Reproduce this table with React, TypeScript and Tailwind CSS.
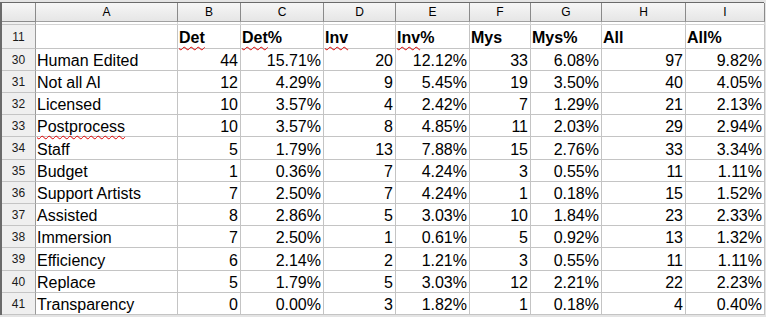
const cols = [
  { key: 'A', w: 'w-[142px]' },
  { key: 'B', w: 'w-[63px]' },
  { key: 'C', w: 'w-[83px]' },
  { key: 'D', w: 'w-[72px]' },
  { key: 'E', w: 'w-[74px]' },
  { key: 'F', w: 'w-[61px]' },
  { key: 'G', w: 'w-[71px]' },
  { key: 'H', w: 'w-[84px]' },
  { key: 'I', w: 'w-[79px]' },
]

const rows: { n: number; h: string; cells: string[]; wavy?: boolean }[] = [
  { n: 30, h: 'h-[22px]', cells: ['Human Edited', '44', '15.71%', '20', '12.12%', '33', '6.08%', '97', '9.82%'] },
  { n: 31, h: 'h-[22px]', cells: ['Not all AI', '12', '4.29%', '9', '5.45%', '19', '3.50%', '40', '4.05%'] },
  { n: 32, h: 'h-[22px]', cells: ['Licensed', '10', '3.57%', '4', '2.42%', '7', '1.29%', '21', '2.13%'] },
  { n: 33, h: 'h-[22px]', cells: ['Postprocess', '10', '3.57%', '8', '4.85%', '11', '2.03%', '29', '2.94%'], wavy: true },
  { n: 34, h: 'h-[23px]', cells: ['Staff', '5', '1.79%', '13', '7.88%', '15', '2.76%', '33', '3.34%'] },
  { n: 35, h: 'h-[22px]', cells: ['Budget', '1', '0.36%', '7', '4.24%', '3', '0.55%', '11', '1.11%'] },
  { n: 36, h: 'h-[22px]', cells: ['Support Artists', '7', '2.50%', '7', '4.24%', '1', '0.18%', '15', '1.52%'] },
  { n: 37, h: 'h-[22px]', cells: ['Assisted', '8', '2.86%', '5', '3.03%', '10', '1.84%', '23', '2.33%'] },
  { n: 38, h: 'h-[22px]', cells: ['Immersion', '7', '2.50%', '1', '0.61%', '5', '0.92%', '13', '1.32%'] },
  { n: 39, h: 'h-[23px]', cells: ['Efficiency', '6', '2.14%', '2', '1.21%', '3', '0.55%', '11', '1.11%'] },
  { n: 40, h: 'h-[22px]', cells: ['Replace', '5', '1.79%', '5', '3.03%', '12', '2.21%', '22', '2.23%'] },
  { n: 41, h: 'h-[22px]', cells: ['Transparency', '0', '0.00%', '3', '1.82%', '1', '0.18%', '4', '0.40%'] },
]

const heads: { word: string; suffix?: string; wavy?: boolean }[] = [
  { word: '' },
  { word: 'Det', wavy: true },
  { word: 'Det', suffix: '%', wavy: true },
  { word: 'Inv', wavy: true },
  { word: 'Inv', suffix: '%', wavy: true },
  { word: 'Mys' },
  { word: 'Mys', suffix: '%' },
  { word: 'All' },
  { word: 'All', suffix: '%' },
]

const wavyCls = 'underline decoration-wavy decoration-[#e00000] decoration-1 underline-offset-[3px]'

const RowHead = ({ label, h }: { label: string | number; h: string }) => (
  <div className={`${h} w-[34px] shrink-0 flex items-center justify-center bg-[#efefef] border-r border-b border-r-[#9a9a9a] border-b-[#c4c4c4] text-[12px] text-[#1a1a1a]`}>
    {label}
  </div>
)

export default function App() {
  return (
    <div className="w-[766px] h-[317px] overflow-hidden bg-[#e4e4e4] pt-[2px] font-['Liberation_Sans',Arial,sans-serif] text-black">
      <div className="w-[764px] border-t border-l-2 border-t-[#6a6a6a] border-l-[#6a6a6a] bg-white">
        {/* column letters */}
        <div className="flex">
          <div className="h-[19px] w-[34px] shrink-0 bg-gradient-to-b from-[#f6f6f6] to-[#e6e6e6] border-r border-b border-[#8a8a8a]" />
          {cols.map((c) => (
            <div
              key={c.key}
              className={`${c.w} h-[19px] shrink-0 flex items-center justify-center bg-gradient-to-b from-[#f6f6f6] to-[#e6e6e6] border-r border-b border-r-[#8a8a8a] border-b-[#a0a0a0] text-[12px]`}
            >
              {c.key}
            </div>
          ))}
        </div>

        {/* frozen split */}
        <div className="flex">
          <div className="h-[3px] w-[34px] shrink-0 bg-[#efefef] border-r border-b border-r-[#9a9a9a] border-b-[#c4c4c4]" />
          {cols.map((c) => (
            <div key={c.key} className={`${c.w} h-[3px] shrink-0 border-r border-b border-[#d4d4d4]`} />
          ))}
        </div>

        {/* row 11 headers */}
        <div className="flex">
          <RowHead label={11} h="h-[24px]" />
          {heads.map((hd, i) => (
            <div
              key={i}
              className={`${cols[i].w} h-[24px] shrink-0 flex items-end pb-[2px] pl-[1px] border-r border-b border-[#c4c4c4] text-[16px] leading-none font-bold`}
            >
              <span className={hd.wavy ? wavyCls : ''}>{hd.word}</span>
              {hd.suffix}
            </div>
          ))}
        </div>

        {rows.map((r) => (
          <div key={r.n} className="flex">
            <RowHead label={r.n} h={r.h} />
            {r.cells.map((v, i) => (
              <div
                key={i}
                className={`${cols[i].w} ${r.h} shrink-0 flex items-end pb-[1px] border-r border-b border-[#c4c4c4] text-[16px] leading-none ${
                  i === 0 ? 'pl-[1px]' : 'justify-end pr-[2px]'
                }`}
              >
                {i === 0 && r.wavy ? <span className={wavyCls}>{v}</span> : v}
              </div>
            ))}
          </div>
        ))}
      </div>
    </div>
  )
}
